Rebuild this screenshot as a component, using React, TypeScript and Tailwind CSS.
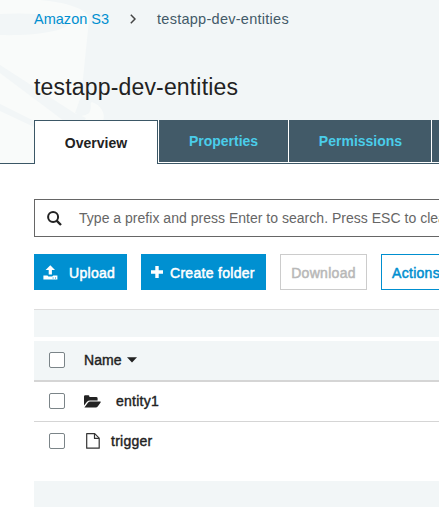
import type { ReactNode } from "react";

function BucketArt() {
  return (
    <svg className="absolute left-0 top-0" width="120" height="163" viewBox="0 0 120 163">
      <path d="M0 0H40C65 2 90 9 89 20L80 108L76 117L86 115C91 111 88 103 92 102C101 105 106 114 103 121L100 163H0Z" fill="#f9fbfa" />
      <path d="M0 14C28 12 62 15 69 23C66 32 30 36 0 35Z" fill="#f2f6f7" />
      <path d="M0 65L76 114L88 114C91 112 92 104 89 98L80 99L75 113L86 118L84 121H64L0 73Z" fill="#f2f6f7" />
      <path d="M0 104L34 121V127L0 111Z" fill="#f2f6f7" />
    </svg>
  );
}

function SearchIcon() {
  return (
    <svg className="block shrink-0" width="15" height="15" viewBox="0 0 15 15" fill="none" stroke="#222" strokeWidth="2">
      <circle cx="6.1" cy="6.1" r="5" />
      <path d="M9.6 9.6L14 14" strokeWidth="2.4" />
    </svg>
  );
}

function UploadIcon() {
  return (
    <svg className="block shrink-0" width="15" height="15" viewBox="0 0 15 15" fill="#fff">
      <path d="M7.3 0.2L12 5H8.9V9.4H5.7V5H2.6Z" />
      <path d="M0.4 10.6H4.4L5.4 11.4H9.2L10.2 10.6H14.4V14.4H0.4ZM9.6 12.4V13.4H10.6V12.4ZM12 12.4V13.4H13V12.4Z" fillRule="evenodd" />
    </svg>
  );
}

function FolderIcon() {
  return (
    <svg className="block" width="17" height="13" viewBox="0 0 17 13" fill="#222">
      <path d="M0 10.5V1.4Q0 0.3 1.2 0.3H4.3Q5.4 0.3 5.4 1.4V1.9H12.1Q13.6 1.9 13.6 3.2V5.4H6Q4.2 5.4 3 6.8Z" />
      <path d="M0.4 12.6L3.9 7.7Q4.8 6.4 6.2 6.4H16.2Q17.2 6.4 16.6 7.4L13.9 11.3Q13.1 12.6 11.6 12.6Z" />
    </svg>
  );
}

function FileIcon() {
  return (
    <svg className="block" width="14" height="16" viewBox="0 0 14 16" fill="none" stroke="#333" strokeWidth="1.2" strokeLinejoin="round">
      <path d="M0.7 0.7H8.7L13.2 5.2V15.2H0.7Z" />
      <path d="M8.5 0.9V5.4H13" />
    </svg>
  );
}

function Checkbox() {
  return <span className="block size-4 shrink-0 rounded-[2px] border border-[#7b8488] bg-white" />;
}

function Tab({ children, className }: { children?: ReactNode; className: string }) {
  return (
    <div className={`mr-px flex h-[42px] shrink-0 items-center justify-center bg-[#425a68] text-[#4acdea] ${className}`}>
      {children}
    </div>
  );
}

export default function App() {
  return (
    <div className="h-[507px] w-[439px] overflow-hidden bg-white font-['Liberation_Sans',Arial,sans-serif] text-sm whitespace-nowrap text-[#222]">
      <header className="relative h-[164px] border-b border-[#3b5766] bg-[#f2f6f7]">
        <BucketArt />
        <div className="relative flex h-[164px] flex-col">
          <nav className="flex h-[38px] shrink-0 items-center pl-[34px] text-[14.5px]">
            <span className="w-[96px] tracking-[0.02px] text-[#008fd0]">Amazon S3</span>
            <svg className="mr-[21px] shrink-0" width="6" height="10" viewBox="0 0 6 10" fill="none" stroke="#444" strokeWidth="1.5">
              <path d="M0.8 0.8L5 5L0.8 9.2" />
            </svg>
            <span className="tracking-[0.27px] text-[#425a68]">testapp-dev-entities</span>
          </nav>
          <h1 className="h-[82px] shrink-0 pt-[34px] pl-[34px] text-[23px] leading-[30px] tracking-[0.17px]">testapp-dev-entities</h1>
          <div className="flex h-11 shrink-0 items-start pl-[34px] font-bold">
            <div className="z-10 flex h-11 w-[124px] shrink-0 items-center justify-center border border-b-0 border-[#3b5766] bg-white">
              Overview
            </div>
            <div className="flex h-[43px] bg-white pl-px">
              <Tab className="w-[129px]">Properties</Tab>
              <Tab className="w-[142px] pl-px">Permissions</Tab>
              <Tab className="w-[142px]" />
            </div>
          </div>
        </div>
      </header>

      <main className="pl-[34px]">
        <div className="mt-[35px] flex h-[38px] items-center border border-r-0 border-[#666] pl-[12px] text-[#666]">
          <SearchIcon />
          <span className="ml-[17px] tracking-[0.02px]">Type a prefix and press Enter to search. Press ESC to clear</span>
        </div>

        <div className="mt-[17px] flex h-9 gap-[14px] tracking-[0.3px] [-webkit-text-stroke:0.5px_currentColor]">
          <button className="flex w-[93px] shrink-0 items-center bg-[#0090d1] pl-[9px] text-white">
            <UploadIcon />
            <span className="ml-[11px] pt-[2px]">Upload</span>
          </button>
          <button className="flex w-[125px] shrink-0 items-center bg-[#0090d1] pl-[10px] text-white">
            <svg className="block shrink-0" width="12" height="12" viewBox="0 0 12 12" fill="#fff">
              <path d="M4.3 0H7.7V4.3H12V7.7H7.7V12H4.3V7.7H0V4.3H4.3Z" />
            </svg>
            <span className="ml-[7px] pt-[2px]">Create folder</span>
          </button>
          <button className="w-[87px] shrink-0 border border-[#ccc] pt-[2px] text-[#b8b8b8]">Download</button>
          <button className="flex w-[90px] shrink-0 items-center border border-[#008fd0] pt-[2px] pl-[10px] text-[#008fd0]">Actions</button>
        </div>

        <section className="mt-[19px] tracking-[0.25px] [-webkit-text-stroke:0.4px_currentColor]">
          <div className="h-7 border-t border-[#ddd] bg-[#f2f6f7]" />
          <div className="mt-1 flex h-[41px] items-center border-b-2 border-[#d5d5d5] bg-[#f2f6f7] pb-px pl-[15px]">
            <Checkbox />
            <span className="ml-[19px] tracking-[0.1px]">Name</span>
            <svg className="ml-[5px]" width="10" height="6" viewBox="0 0 10 6" fill="#222">
              <path d="M0 0.3H10L5 5.5Z" />
            </svg>
          </div>
          <div className="flex h-10 items-center border-b border-[#d5d5d5] pb-px pl-[15px]">
            <Checkbox />
            <span className="ml-[19px]"><FolderIcon /></span>
            <span className="ml-[15px]">entity1</span>
          </div>
          <div className="flex h-[38px] items-center pl-[15px]">
            <Checkbox />
            <span className="ml-[21px]"><FileIcon /></span>
            <span className="ml-[11px]">trigger</span>
          </div>
          <div className="mt-[21px] h-[26px] bg-[#f2f6f7]" />
        </section>
      </main>
    </div>
  );
}
